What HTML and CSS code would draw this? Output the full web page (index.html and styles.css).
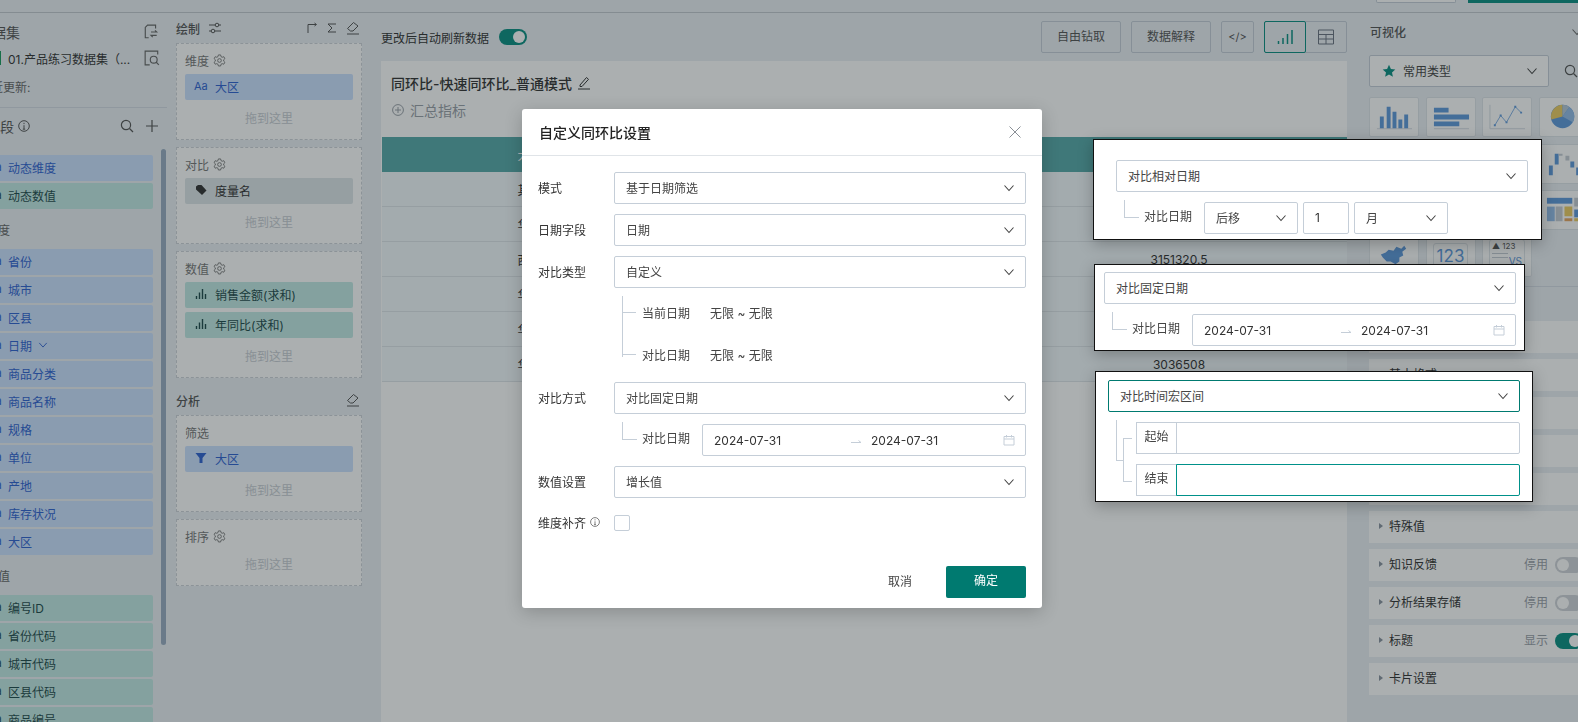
FILE: index.html
```html
<!DOCTYPE html>
<html lang="zh-CN">
<head>
    <meta charset="UTF-8">
    <meta name="viewport" content="width=device-width, initial-scale=1.0">
    <title>自定义同环比设置</title>
    <link rel="stylesheet" href="styles.css">
</head>
<body>
    <svg class="sprite" aria-hidden="true">
        <symbol id="chev" viewBox="0 0 12 12"><path d="M1.500 3.500 6 8.500l4.500-5" fill="none" stroke="currentColor" stroke-width="1.100"/></symbol>
        <symbol id="gear" viewBox="0 0 14 14"><path d="M5.800 1h2.400l.4 1.800 1.300.7 1.700-.6 1.200 2.100-1.300 1.200v1.500l1.300 1.200-1.200 2.100-1.700-.6-1.300.7-.4 1.800H5.800l-.4-1.800-1.300-.7-1.700.6-1.200-2.100 1.300-1.200V6.200L1.200 5l1.200-2.100 1.700.6 1.300-.7z" fill="none" stroke="currentColor"/><circle cx="7" cy="7" r="2" fill="none" stroke="currentColor"/></symbol>
        <symbol id="bars" viewBox="0 0 12 12"><path d="M1.500 11V8M4.500 11V4.500M7.500 11V1M10.500 11V6" fill="none" stroke="currentColor" stroke-width="1.400"/></symbol>
        <symbol id="eraser" viewBox="0 0 14 14"><path d="M1.500 7.500 7.500 1.500l4.500 3.500-5 5H4.500zM1 13h12" fill="none" stroke="currentColor"/></symbol>
        <symbol id="search" viewBox="0 0 14 14"><circle cx="6" cy="6" r="4.600" fill="none" stroke="currentColor" stroke-width="1.200"/><path d="m9.500 9.500 3.500 3.500" stroke="currentColor" stroke-width="1.200"/></symbol>
        <symbol id="info" viewBox="0 0 12 12"><circle cx="6" cy="6" r="5.300" fill="none" stroke="currentColor"/><path d="M6 5.200v3.800M4.800 9.200h2.400M6 2.800v1.300" fill="none" stroke="currentColor"/></symbol>
        <symbol id="cal" viewBox="0 0 12 12"><path d="M1 2.500h10V11H1zM1 5h10M3.500 1v2.500M8.500 1v2.500" fill="none" stroke="currentColor"/></symbol>
        <symbol id="arrow" viewBox="0 0 12 6"><path d="M1 4.500h10L8.500 2.500" fill="none" stroke="currentColor"/></symbol>
    </svg>

    <div class="topbar">
        <span class="top-btn"></span>
        <span class="top-primary"></span>
    </div>

    <div class="main">
        <div class="data-panel">
            <div class="data-head">
                <span class="panel-title">数据集</span>
                <svg class="icon-16" viewBox="0 0 14 14"><path d="M9 1H4L2 3v9h3M9 1h2v3M7 7h5l-1.500-1.500M12 10H7l1.500 1.500" fill="none" stroke="currentColor"/></svg>
            </div>
            <div class="dataset-row">
                <span class="dataset-mark"></span>
                <span class="dataset-name">01.产品练习数据集（...</span>
                <svg class="icon-16" viewBox="0 0 14 14"><path d="M12 4V1H1v12h4" fill="none" stroke="currentColor"/><circle cx="8.500" cy="8.500" r="3" fill="none" stroke="currentColor"/><path d="m10.500 10.500 2.500 2.500" stroke="currentColor"/></svg>
            </div>
            <div class="update-row">最近更新:</div>
            <div class="field-head">
                <span class="panel-title">字段</span>
                <svg class="icon-12 info-mark"><use href="#info"/></svg>
                <span class="spacer"></span>
                <svg class="icon-14"><use href="#search"/></svg>
                <svg class="icon-14" viewBox="0 0 14 14"><path d="M7 1v12M1 7h12" stroke="currentColor" stroke-width="1.200"/></svg>
            </div>
            <div class="field-list first-list">
                <div class="field-item blue"><span class="field-icon">Aa</span>动态维度</div>
                <div class="field-item green"><span class="field-icon">Aa</span>动态数值</div>
            </div>
            <div class="group-label">维度</div>
            <div class="field-list">
                <div class="field-item blue"><span class="field-icon">Aa</span>省份</div>
                <div class="field-item blue"><span class="field-icon">Aa</span>城市</div>
                <div class="field-item blue"><span class="field-icon">Aa</span>区县</div>
                <div class="field-item blue"><span class="field-icon">Aa</span>日期<svg class="icon-10"><use href="#chev"/></svg></div>
                <div class="field-item blue"><span class="field-icon">Aa</span>商品分类</div>
                <div class="field-item blue"><span class="field-icon">Aa</span>商品名称</div>
                <div class="field-item blue"><span class="field-icon">Aa</span>规格</div>
                <div class="field-item blue"><span class="field-icon">Aa</span>单位</div>
                <div class="field-item blue"><span class="field-icon">Aa</span>产地</div>
                <div class="field-item blue"><span class="field-icon">Aa</span>库存状况</div>
                <div class="field-item blue"><span class="field-icon">Aa</span>大区</div>
            </div>
            <div class="group-label">数值</div>
            <div class="field-list">
                <div class="field-item green"><span class="field-icon">Aa</span>编号ID</div>
                <div class="field-item green"><span class="field-icon">Aa</span>省份代码</div>
                <div class="field-item green"><span class="field-icon">Aa</span>城市代码</div>
                <div class="field-item green"><span class="field-icon">Aa</span>区县代码</div>
                <div class="field-item green"><span class="field-icon">Aa</span>商品编号</div>
            </div>
            <div class="scrollbar"></div>
        </div>

        <div class="draw-panel">
            <div class="title-row">
                <span class="panel-title">绘制</span>
                <svg class="icon-14 sliders" viewBox="0 0 14 14"><path d="M1 4h12M1 10h12" stroke="currentColor"/><circle cx="9" cy="4" r="1.800" fill="#ebf0f5" stroke="currentColor"/><circle cx="5" cy="10" r="1.800" fill="#ebf0f5" stroke="currentColor"/></svg>
                <span class="spacer"></span>
                <svg class="icon-12" viewBox="0 0 12 12"><path d="M2 11V2.500h8M8.500 1 10.500 2.500 8.500 4" fill="none" stroke="currentColor"/></svg>
                <svg class="icon-12" viewBox="0 0 12 12"><path d="M10 2H2l4 4-4 4h8" fill="none" stroke="currentColor"/></svg>
                <svg class="icon-14"><use href="#eraser"/></svg>
            </div>
            <div class="drop-box">
                <div class="box-label">维度<svg class="icon-14"><use href="#gear"/></svg></div>
                <div class="field-item blue"><span class="field-icon">Aa</span>大区</div>
                <div class="drop-hint">拖到这里</div>
            </div>
            <div class="drop-box">
                <div class="box-label">对比<svg class="icon-14"><use href="#gear"/></svg></div>
                <div class="field-item gray">
                    <span class="field-icon"><svg class="icon-12" viewBox="0 0 12 12"><path d="M1 2.500 3 1h3.500l5 5.500-4.500 4.500L1 5.500z" fill="currentColor"/></svg></span>度量名
                </div>
                <div class="drop-hint">拖到这里</div>
            </div>
            <div class="drop-box">
                <div class="box-label">数值<svg class="icon-14"><use href="#gear"/></svg></div>
                <div class="field-item green"><span class="field-icon"><svg class="icon-12"><use href="#bars"/></svg></span>销售金额(求和)</div>
                <div class="field-item green"><span class="field-icon"><svg class="icon-12"><use href="#bars"/></svg></span>年同比(求和)</div>
                <div class="drop-hint">拖到这里</div>
            </div>
            <div class="title-row">
                <span class="panel-title">分析</span>
                <span class="spacer"></span>
                <svg class="icon-14"><use href="#eraser"/></svg>
            </div>
            <div class="drop-box">
                <div class="box-label">筛选</div>
                <div class="field-item blue">
                    <span class="field-icon"><svg class="icon-12" viewBox="0 0 12 12"><path d="M.5 1h11L7.500 6v5h-3V6z" fill="currentColor"/></svg></span>大区
                </div>
                <div class="drop-hint">拖到这里</div>
            </div>
            <div class="drop-box">
                <div class="box-label">排序<svg class="icon-14"><use href="#gear"/></svg></div>
                <div class="drop-hint">拖到这里</div>
            </div>
        </div>

        <div class="center">
            <div class="toolbar">
                <span class="refresh-label">更改后自动刷新数据</span>
                <span class="switch on"></span>
                <span class="spacer"></span>
                <span class="tool-btn">自由钻取</span>
                <span class="tool-btn">数据解释</span>
                <span class="tool-btn code-btn">&lt;/&gt;</span>
                <div class="view-switch">
                    <span class="view-btn active"><svg class="icon-16" viewBox="0 0 16 16"><path d="M1.500 15v-3M6 15V9M10.500 15V5M15 15V1" stroke="currentColor" stroke-width="1.500"/></svg></span>
                    <span class="view-btn"><svg class="icon-16" viewBox="0 0 16 16"><path d="M.5 1h15v14H.5zM.5 5.500h15M.5 10h15M8 5.500V15" fill="none" stroke="currentColor"/></svg></span>
                </div>
            </div>
            <div class="chart-card">
                <div class="card-title">同环比-快速同环比_普通模式
                    <svg class="icon-14" viewBox="0 0 14 14"><path d="m3 9 6.500-7.500 2 1.800L5 10.500H3zM1 13h12" fill="none" stroke="currentColor"/></svg>
                </div>
                <div class="summary-row">
                    <svg class="icon-12" viewBox="0 0 12 12"><circle cx="6" cy="6" r="5.400" fill="none" stroke="currentColor"/><path d="M6 3v6M3 6h6" stroke="currentColor"/></svg>
                    汇总指标
                </div>
                <div class="data-table">
                    <div class="table-row head"><span>大区</span><span></span><span>销售金额</span></div>
                    <div class="table-row"><span>其他</span><span></span><span></span></div>
                    <div class="table-row"><span>华东</span><span></span><span></span></div>
                    <div class="table-row"><span>西南</span><span></span><span>3151320.5</span></div>
                    <div class="table-row"><span>华北</span><span></span><span></span></div>
                    <div class="table-row"><span>华中</span><span></span><span></span></div>
                    <div class="table-row"><span>华南</span><span></span><span>3036508</span></div>
                </div>
            </div>
        </div>

        <div class="right-panel">
            <div class="vis-head">
                <span class="panel-title small">可视化</span>
                <span class="spacer"></span>
                <svg class="icon-12 vis-chev"><use href="#chev"/></svg>
            </div>
            <div class="type-row">
                <div class="type-select">
                    <svg class="icon-14 star" viewBox="0 0 14 14"><path d="m7 .8 1.900 4.100 4.400.5-3.300 3 .9 4.400L7 10.600l-3.900 2.200.9-4.400-3.300-3 4.400-.5z" fill="currentColor"/></svg>
                    <span>常用类型</span>
                    <span class="spacer"></span>
                    <svg class="icon-12"><use href="#chev"/></svg>
                </div>
                <svg class="icon-14"><use href="#search"/></svg>
            </div>
            <div class="tile-grid">
                <div class="tile"><svg viewBox="0 0 49 39"><path d="M7 31.500h36" stroke="#d5dce4"/><path d="M10 19h4v12h-4zM17 9h4v22h-4zM23 14h4v17h-4zM29 22h4v9h-4zM35 17h4v14h-4z" fill="#5f99dc"/></svg></div>
                <div class="tile"><svg viewBox="0 0 49 39"><path d="M7 31.500h36" stroke="#d5dce4"/><path d="M7 10h15v5H7zM7 17h36v5H7zM7 24h26v5H7z" fill="#5f99dc"/></svg></div>
                <div class="tile"><svg viewBox="0 0 49 39"><path d="M7 7v24.500h36" fill="none" stroke="#d5dce4"/><path d="m12 28 6-10 6 7 9-16 6 6" fill="none" stroke="#5f99dc" stroke-width=".8"/><path d="M11 27h2v2h-2zM17 17h2v2h-2zM23 24h2v2h-2zM32 8h2v2h-2zM38 14h2v2h-2z" fill="#5f99dc"/></svg></div>
                <div class="tile"><svg viewBox="0 0 49 39"><circle cx="23" cy="19" r="12" fill="#5f99dc"/><path d="M23 19 11.500 22A12 12 0 0 1 23 7z" fill="#eccb62"/><path d="M23 19V7a12 12 0 0 1 7 2.200z" fill="#b6c8d8"/><path d="m23 19 7-9.800A12 12 0 0 1 33.500 25z" fill="#93bce8"/></svg></div>
                <div class="tile"></div>
                <div class="tile"></div>
                <div class="tile"></div>
                <div class="tile"><svg viewBox="0 0 49 39"><path d="M9 21h4v10H9zM15 9h4v11h-4zM31 17h4v6h-4zM37 23h4v8h-4z" fill="#5f99dc"/><path d="M19 9h4v2h-4zM26 11h4v5h-4z" fill="#c5ccd4"/></svg></div>
                <div class="tile"></div>
                <div class="tile"></div>
                <div class="tile"></div>
                <div class="tile"><svg viewBox="0 0 49 39"><path d="M7 7h26v6H7z" fill="#5f99dc"/><path d="M35 7h9v9h-9zM16 16h7v15h-7z" fill="#c5ccd4"/><path d="M7 16h8v15H7z" fill="#93bce8"/><path d="M25 16h8v10h-8zM35 28h9v3h-9z" fill="#eccb62"/><path d="M25 28h8v3h-8z" fill="#e6a560"/><path d="M35 19h9v8h-9z" fill="#5f99dc"/></svg></div>
                <div class="tile"><svg viewBox="0 0 49 39"><path d="m11 17 5-2 3-3 5 1 3-4 5 2 3-3 2 3-4 3 1 4-4 2 0 4-4 3-5-3-4 0-4-4z" fill="#5f99dc"/></svg></div>
                <div class="tile centered"><span class="num-card">123</span></div>
                <div class="tile centered"><span class="vs-card"><span class="vs-top">▲ 123</span><span class="vs-lines"></span><span class="vs-text">VS</span></span></div>
            </div>
            <div class="rows-block">
                <div class="set-row"></div>
                <div class="set-row"><span class="caret"></span>基本格式</div>
                <div class="set-row"></div>
                <div class="set-row"></div>
                <div class="set-row"></div>
                <div class="set-row"><span class="caret"></span>特殊值</div>
                <div class="set-row"><span class="caret"></span>知识反馈<span class="spacer"></span><span class="row-state">停用</span><span class="switch"></span></div>
                <div class="set-row"><span class="caret"></span>分析结果存储<span class="spacer"></span><span class="row-state">停用</span><span class="switch"></span></div>
                <div class="set-row"><span class="caret"></span>标题<span class="spacer"></span><span class="row-state">显示</span><span class="switch on"></span></div>
                <div class="set-row"><span class="caret"></span>卡片设置</div>
            </div>
        </div>
    </div>

    <div class="mask"></div>

    <div class="modal">
        <div class="modal-head">
            <span>自定义同环比设置</span>
            <svg class="icon-14 close" viewBox="0 0 14 14"><path d="m1.500 1.500 11 11M12.500 1.500l-11 11" stroke="currentColor"/></svg>
        </div>
        <div class="modal-body">
            <div class="form-row">
                <label>模式</label>
                <div class="select"><span>基于日期筛选</span><svg class="icon-12"><use href="#chev"/></svg></div>
            </div>
            <div class="form-row">
                <label>日期字段</label>
                <div class="select"><span>日期</span><svg class="icon-12"><use href="#chev"/></svg></div>
            </div>
            <div class="form-row tight">
                <label>对比类型</label>
                <div class="select"><span>自定义</span><svg class="icon-12"><use href="#chev"/></svg></div>
            </div>
            <div class="date-tree">
                <div class="tree-row"><span class="branch"></span><span class="tree-label">当前日期</span><span>无限 ~ 无限</span></div>
                <div class="tree-row"><span class="branch"></span><span class="tree-label">对比日期</span><span>无限 ~ 无限</span></div>
            </div>
            <div class="form-row">
                <label>对比方式</label>
                <div class="control-stack">
                    <div class="select"><span>对比固定日期</span><svg class="icon-12"><use href="#chev"/></svg></div>
                    <div class="sub-row">
                        <span class="elbow"></span>
                        <span class="sub-label">对比日期</span>
                        <div class="date-range">
                            <span class="date-val">2024-07-31</span>
                            <svg class="range-arrow"><use href="#arrow"/></svg>
                            <span class="date-val">2024-07-31</span>
                            <svg class="icon-12 cal"><use href="#cal"/></svg>
                        </div>
                    </div>
                </div>
            </div>
            <div class="form-row">
                <label>数值设置</label>
                <div class="select"><span>增长值</span><svg class="icon-12"><use href="#chev"/></svg></div>
            </div>
            <div class="form-row check-row">
                <label>维度补齐<svg class="icon-10 label-info"><use href="#info"/></svg></label>
                <span class="checkbox"></span>
            </div>
            <div class="modal-foot">
                <span class="cancel-btn">取消</span>
                <span class="ok-btn">确定</span>
            </div>
        </div>
    </div>

    <div class="snippet snippet-relative">
        <div class="select"><span>对比相对日期</span><svg class="icon-12"><use href="#chev"/></svg></div>
        <div class="sub-row">
            <span class="elbow"></span>
            <span class="sub-label">对比日期</span>
            <div class="select shift-select"><span>后移</span><svg class="icon-12"><use href="#chev"/></svg></div>
            <div class="num-input">1</div>
            <div class="select shift-select"><span>月</span><svg class="icon-12"><use href="#chev"/></svg></div>
        </div>
    </div>

    <div class="snippet snippet-fixed">
        <div class="select"><span>对比固定日期</span><svg class="icon-12"><use href="#chev"/></svg></div>
        <div class="sub-row">
            <span class="elbow"></span>
            <span class="sub-label">对比日期</span>
            <div class="date-range">
                <span class="date-val">2024-07-31</span>
                <svg class="range-arrow"><use href="#arrow"/></svg>
                <span class="date-val">2024-07-31</span>
                <svg class="icon-12 cal"><use href="#cal"/></svg>
            </div>
        </div>
    </div>

    <div class="snippet snippet-macro">
        <div class="select focus"><span>对比时间宏区间</span><svg class="icon-12"><use href="#chev"/></svg></div>
        <div class="macro-rows">
            <span class="macro-tree"></span>
            <div class="addon-row"><span class="addon">起始</span><span class="addon-input"></span></div>
            <div class="addon-row"><span class="addon">结束</span><span class="addon-input focus"></span></div>
        </div>
    </div>
</body>
</html>
```

FILE: styles.css
```css
* {
    box-sizing: border-box;
}

html,
body {
    margin: 0;
    height: 100%;
    overflow: hidden;
}

body {
    font-family: Inter, "Noto Sans CJK SC", sans-serif;
    font-size: 12px;
    color: #333;
    background-color: #ebf0f5;
}

.sprite {
    display: none;
}

svg {
    display: block;
    flex: none;
}

.icon-10 { width: 10px; height: 10px; }
.icon-12 { width: 12px; height: 12px; }
.icon-14 { width: 14px; height: 14px; }
.icon-16 { width: 16px; height: 16px; }

.spacer {
    flex: 1;
}

/* top bar, only its lower edge is on screen */
.topbar {
    height: 13px;
    border-bottom: 1px solid #c2c8cf;
    display: flex;
    justify-content: flex-end;
    gap: 12px;
    overflow: hidden;
}

.top-btn {
    width: 80px;
    height: 3px;
    background-color: #fff;
    border: 1px solid #c5ced8;
    border-top: none;
    border-radius: 0 0 2px 2px;
}

.top-primary {
    width: 110px;
    height: 3px;
    background-color: #0a8f82;
}

.main {
    display: flex;
    height: 709px;
    margin-left: -30px;
    overflow: hidden;
}

.panel-title {
    font-size: 14px;
    color: #555;
}

.panel-title.small {
    font-size: 12px;
    font-weight: 500;
}

/* data panel */
.data-panel {
    position: relative;
    width: 200px;
    flex: none;
    padding-left: 8px;
    color: #444;
}

.data-head {
    height: 33px;
    padding-top: 5px;
    margin-right: 11px;
    display: flex;
    align-items: center;
    justify-content: space-between;
}

.data-head .icon-16,
.dataset-row .icon-16 {
    color: #666;
}

.dataset-row {
    height: 24px;
    margin-right: 10px;
    display: flex;
    align-items: center;
    justify-content: space-between;
}

.dataset-mark {
    width: 3px;
    height: 14px;
    margin-left: 20px;
    background-color: #1a9c5f;
}

.dataset-name {
    flex: 1;
    margin-left: 7px;
    color: #333;
    white-space: nowrap;
}

.update-row {
    margin: 6px 3px 0 0;
    height: 32px;
    padding: 2px 0 9px 1px;
    border-bottom: 1px solid #d5dce4;
    color: #666;
}

.field-head {
    height: 36px;
    padding-left: 8px;
    margin-right: 11px;
    display: flex;
    align-items: center;
    gap: 4px;
    color: #555;
}

.field-head .icon-14 {
    margin-left: 7px;
}

.first-list {
    margin-top: 11px;
}

.field-list {
    display: flex;
    flex-direction: column;
    gap: 2px;
    width: 175px;
}

.group-label {
    height: 26px;
    line-height: 24px;
    margin: 10px 0 4px 8px;
    color: #666;
}

.field-item {
    height: 26px;
    padding: 0 0 2px 8px;
    display: flex;
    align-items: center;
    border-radius: 2px;
    flex: none;
}

.field-item .icon-10 {
    margin-left: 6px;
}

.field-icon {
    width: 22px;
    flex: none;
    font-size: 11px;
    padding-left: 1px;
}

.data-panel .field-icon {
    padding-left: 2px;
}

.field-icon .icon-12 {
    margin-left: 1px;
}

.blue {
    background-color: #cce1ff;
    color: #2f63d2;
}

.green {
    background-color: #c3eae4;
    color: #1e4a4c;
}

.gray {
    background-color: #dee6e9;
    color: #333;
}

.scrollbar {
    position: absolute;
    left: 191px;
    top: 136px;
    width: 5px;
    height: 496px;
    border-radius: 3px;
    background-color: #9aadc2;
}

/* draw panel */
.draw-panel {
    width: 208px;
    flex: none;
    padding: 0 16px 0 6px;
}

.title-row {
    height: 30px;
    display: flex;
    align-items: center;
    gap: 4px;
    color: #555;
}

.title-row .icon-14,
.title-row .icon-12 {
    margin-left: 4px;
}

.title-row .icon-14:last-child {
    margin-right: 2px;
}

.title-row .panel-title {
    font-weight: 500;
    font-size: 12px;
}

.drop-box {
    padding: 0 8px 7px;
    margin-bottom: 7px;
    border: 1px dashed #cfd4da;
    background-color: #fff;
}

.box-label {
    height: 30px;
    padding-top: 2px;
    display: flex;
    align-items: center;
    gap: 4px;
    color: #777;
}

.box-label .icon-14 {
    width: 13px;
    height: 13px;
}

.drop-box .field-item {
    margin-bottom: 4px;
}

.drop-hint {
    height: 28px;
    line-height: 29px;
    text-align: center;
    color: #c8cdd3;
}

/* center column */
.center {
    width: 969px;
    flex: none;
    padding-left: 3px;
}

.toolbar {
    height: 48px;
    display: flex;
    align-items: center;
}

.refresh-label {
    margin-right: 10px;
}

.switch {
    position: relative;
    display: block;
    width: 28px;
    height: 16px;
    flex: none;
    border-radius: 8px;
    background-color: #d0d4d9;
}

.switch::after {
    content: "";
    position: absolute;
    left: 2px;
    top: 2px;
    width: 12px;
    height: 12px;
    border-radius: 50%;
    background-color: #fff;
}

.switch.on {
    background-color: #0a8f82;
}

.switch.on::after {
    left: 14px;
}

.tool-btn {
    width: 80px;
    height: 32px;
    line-height: 30px;
    text-align: center;
    margin-right: 10px;
    border: 1px solid #c5ced8;
    border-radius: 2px;
    color: #555;
}

.code-btn {
    width: 33px;
    font-size: 11px;
}

.view-switch {
    display: flex;
    width: 83px;
    height: 32px;
    border: 1px solid #c5ced8;
    border-radius: 2px;
}

.view-btn {
    width: 41px;
    display: flex;
    align-items: center;
    justify-content: center;
    color: #6b7280;
}

.view-btn.active {
    margin: -1px 0 -1px -1px;
    width: 42px;
    border: 1px solid #0a8f82;
    border-radius: 2px;
    color: #0a8f82;
}

.chart-card {
    height: 661px;
    padding-top: 11px;
    background-color: #fff;
}

.card-title {
    display: flex;
    align-items: center;
    gap: 5px;
    height: 22px;
    margin-left: 10px;
    font-size: 14px;
    font-weight: 500;
    color: #333;
}

.summary-row {
    display: flex;
    align-items: center;
    gap: 6px;
    height: 22px;
    margin: 5px 0 16px 11px;
    font-size: 14px;
    color: #9aa0a8;
}

.data-table {
    margin-left: 1px;
}

.table-row {
    display: grid;
    grid-template-columns: 295px 1fr 336px;
    height: 35px;
    align-items: center;
    text-align: center;
    background-color: #f3f9fc;
    border-bottom: 1px solid #dfe4ea;
}

.table-row.head {
    background-color: #57a9a9;
    color: #fff;
    border-bottom: none;
}

/* right column */
.right-panel {
    flex: 1;
    min-width: 0;
    padding-left: 22px;
    overflow: hidden;
}

.vis-head {
    height: 42px;
    padding: 0 0 5px 1px;
    display: flex;
    align-items: center;
}

.vis-chev {
    margin-right: -5px;
    color: #666;
}

.type-row {
    display: flex;
    align-items: center;
    gap: 15px;
    color: #555;
}

.type-select {
    width: 180px;
    height: 32px;
    padding: 0 10px 0 12px;
    display: flex;
    align-items: center;
    gap: 7px;
    background-color: #fff;
    border: 1px solid #c5ced8;
    border-radius: 2px;
    color: #444;
}

.type-select span:not(.spacer) {
    padding-bottom: 2px;
}

.star {
    color: #0a8f82;
}

.tile-grid {
    display: grid;
    grid-template-columns: repeat(4, 50px);
    grid-auto-rows: 40px;
    gap: 6.5px;
    margin-top: 10px;
}

.tile {
    background-color: #fff;
    border: 1px solid #dfe4ea;
    border-radius: 2px;
}

.tile.centered {
    display: flex;
    align-items: center;
    justify-content: center;
    padding-bottom: 2px;
}

.tile svg {
    width: 100%;
    height: 100%;
}

.num-card {
    padding: 0 3px;
    font-size: 17px;
    line-height: 24px;
    color: #5f99dc;
    border: 1px solid #dfe4ea;
    border-radius: 3px;
}

.vs-card {
    width: 36px;
    height: 34px;
    padding: 1px 2px;
    border: 1px solid #dfe4ea;
    border-radius: 3px;
    display: flex;
    flex-direction: column;
}

.vs-top {
    font-size: 8px;
    line-height: 11px;
    color: #555;
}

.vs-lines {
    width: 16px;
    height: 5px;
    margin-top: 1px;
    border-top: 1px solid #c5ccd4;
    border-bottom: 1px solid #c5ccd4;
}

.vs-text {
    margin-top: -3px;
    font-size: 10px;
    line-height: 12px;
    color: #5f99dc;
    text-align: right;
}

.rows-block {
    margin: 9px 0 0 -22px;
    padding: 34px 0 0 22px;
    border-top: 1px solid #d5dce4;
}

.set-row {
    height: 32px;
    margin-bottom: 6px;
    padding: 0 0 2px 10px;
    display: flex;
    align-items: center;
    background-color: #fff;
    color: #333;
}

.caret {
    width: 0;
    height: 0;
    margin-right: 6px;
    border-left: 4px solid #8a93a0;
    border-top: 3.500px solid transparent;
    border-bottom: 3.500px solid transparent;
}

.row-state {
    margin-right: 7px;
    color: #9aa0a8;
}

.set-row .switch {
    margin: 2px -5px 0 0;
}

/* mask and dialog */
.mask {
    position: fixed;
    inset: 0;
    background-color: rgba(22, 33, 36, 0.36);
}

.modal {
    position: absolute;
    left: 522px;
    top: 109px;
    width: 520px;
    background-color: #fff;
    border-radius: 3px;
    box-shadow: 0 4px 18px rgba(0, 0, 0, 0.2);
}

.modal-head {
    height: 47px;
    padding: 0 20px 0 17px;
    display: flex;
    align-items: center;
    justify-content: space-between;
    border-bottom: 1px solid #e0e4e8;
    font-size: 14px;
    font-weight: 500;
    color: #222;
}

.close {
    color: #8a8f96;
}

.modal-body {
    padding: 16px 16px 10px;
}

.form-row {
    display: grid;
    grid-template-columns: 76px 1fr;
    margin-bottom: 10px;
}

.form-row.tight {
    margin-bottom: 8px;
}

.form-row label {
    height: 32px;
    padding-bottom: 2px;
    display: flex;
    align-items: center;
    color: #333;
}

.select {
    height: 32px;
    padding: 0 10px 0 11px;
    display: flex;
    align-items: center;
    justify-content: space-between;
    border: 1px solid #c5ced8;
    border-radius: 2px;
    background-color: #fff;
    color: #444;
}

.select span {
    padding-bottom: 2px;
}

.select.focus {
    border-color: #007a70;
}

.date-tree {
    position: relative;
    margin: 0 0 14px 84px;
    height: 72px;
    padding-top: 5px;
    display: flex;
    flex-direction: column;
    gap: 20px;
}

.date-tree::before {
    content: "";
    position: absolute;
    left: 0;
    top: 0;
    bottom: 11px;
    border-left: 1px solid #c5ced8;
}

.tree-row {
    height: 22px;
    display: flex;
    align-items: center;
    color: #444;
}

.branch {
    width: 14px;
    margin-right: 6px;
    border-top: 1px solid #c5ced8;
}

.tree-label {
    width: 68px;
}

.control-stack {
    min-width: 0;
}

.sub-row {
    display: flex;
    gap: 5px;
    height: 32px;
    margin: 10px 0 0 8px;
}

.elbow {
    width: 15px;
    height: 18px;
    margin-top: -2px;
    flex: none;
    border-left: 1px solid #c5ced8;
    border-bottom: 1px solid #c5ced8;
}

.sub-label {
    width: 55px;
    flex: none;
    line-height: 30px;
    color: #444;
}

.date-range {
    flex: 1;
    height: 32px;
    padding: 0 10px 0 11px;
    display: flex;
    align-items: center;
    border: 1px solid #c5ced8;
    border-radius: 2px;
    color: #333;
}

.date-val {
    width: 68px;
    white-space: nowrap;
}

.range-arrow {
    width: 12px;
    height: 6px;
    margin: 1px 9px 0 68px;
    color: #c5ced8;
}

.cal {
    margin-left: auto;
    color: #c5ced8;
}

.check-row {
    margin: 17px 0 0;
    height: 16px;
    align-items: center;
}

.check-row label {
    height: 16px;
    gap: 4px;
}

.label-info {
    color: #666;
}

.checkbox {
    width: 16px;
    height: 16px;
    border: 1px solid #c5ced8;
    border-radius: 2px;
}

.modal-foot {
    margin-top: 35px;
    display: flex;
    align-items: center;
    justify-content: flex-end;
}

.cancel-btn {
    width: 80px;
    line-height: 30px;
    text-align: center;
    margin-right: 6px;
    color: #444;
}

.ok-btn {
    width: 80px;
    height: 32px;
    line-height: 30px;
    text-align: center;
    border-radius: 2px;
    background-color: #007a70;
    color: #fff;
}

/* pasted crops of the other comparison modes */
.snippet {
    position: absolute;
    background-color: #fff;
    border: 1px solid #111;
    box-shadow: 0 4px 14px rgba(0, 0, 0, 0.25);
}

.snippet-relative {
    left: 1093px;
    top: 139px;
    width: 449px;
    height: 101px;
    padding: 20px 13px 0 22px;
}

.snippet-fixed {
    left: 1094px;
    top: 264px;
    width: 431px;
    height: 87px;
    padding: 7px 8px 0 9px;
}

.snippet-macro {
    left: 1095px;
    top: 371px;
    width: 438px;
    height: 131px;
    padding: 8px 12px 0 12px;
}

.shift-select {
    width: 94px;
    flex: none;
}

.num-input {
    width: 46px;
    height: 32px;
    line-height: 30px;
    padding-left: 11px;
    flex: none;
    border: 1px solid #c5ced8;
    border-radius: 2px;
}

.macro-rows {
    position: relative;
    margin-top: 10px;
    padding-left: 28px;
    display: flex;
    flex-direction: column;
    gap: 10px;
}

.macro-tree {
    position: absolute;
    left: 8px;
    top: -2px;
}

.macro-tree::before {
    content: "";
    position: absolute;
    left: 0;
    top: 0;
    width: 7px;
    height: 40px;
    border-left: 1px solid #c5ced8;
    border-bottom: 1px solid #c5ced8;
}

.macro-tree::after {
    content: "";
    position: absolute;
    left: 7px;
    top: 18px;
    width: 8px;
    height: 42px;
    border-left: 1px solid #c5ced8;
    border-top: 1px solid #c5ced8;
    border-bottom: 1px solid #c5ced8;
}

.addon-row {
    display: flex;
    height: 32px;
}

.addon {
    width: 41px;
    flex: none;
    line-height: 28px;
    text-align: center;
    border: 1px solid #c5ced8;
    color: #444;
}

.addon-input {
    flex: 1;
    margin-left: -1px;
    border: 1px solid #c5ced8;
    border-radius: 0 2px 2px 0;
}

.addon-input.focus {
    border-color: #00918a;
}
```
